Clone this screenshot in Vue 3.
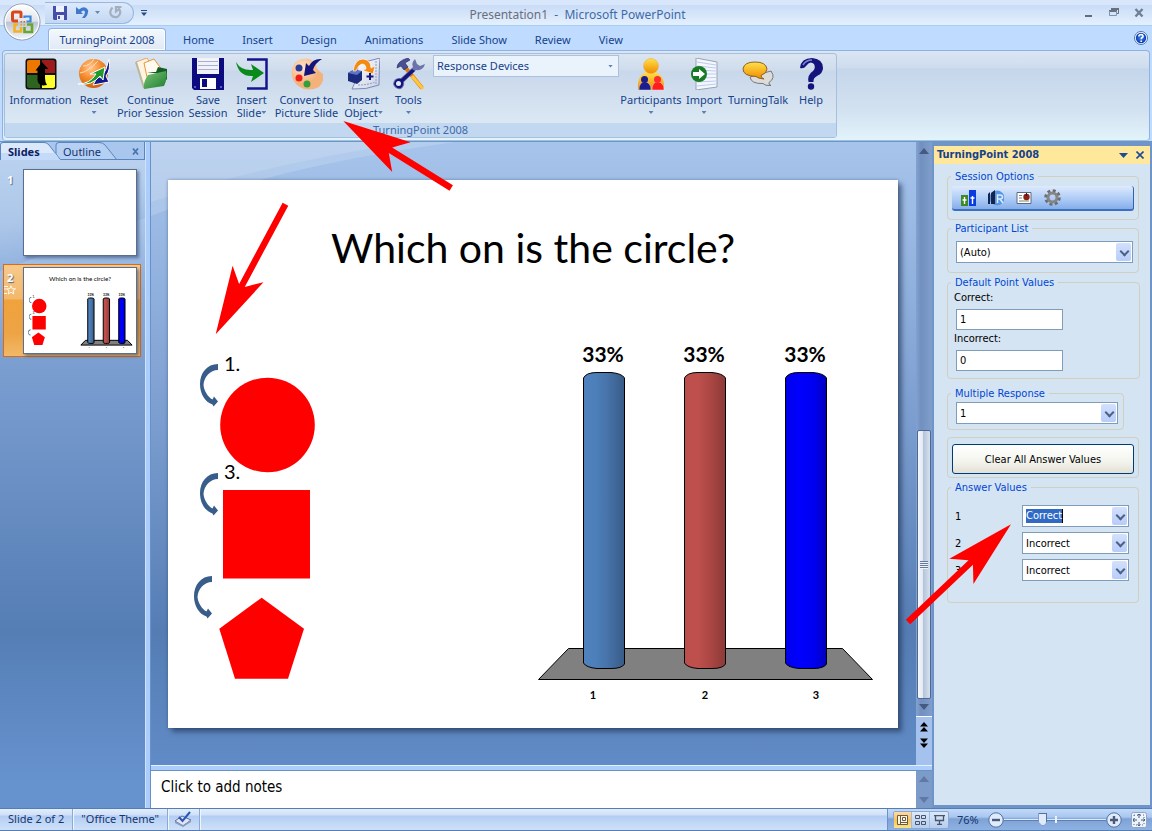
<script setup>
import { ref } from 'vue'

const tabs = ['Home', 'Insert', 'Design', 'Animations', 'Slide Show', 'Review', 'View']
const commandsLeft = [
  { id: 'info', cls: 'w-info', lines: ['Information'] },
  { id: 'reset', cls: 'w-reset', lines: ['Reset'], drop: true },
  { id: 'continue', cls: 'w-continue', lines: ['Continue', 'Prior Session'] },
  { id: 'save', cls: 'w-save', lines: ['Save', 'Session'] },
  { id: 'insert', cls: 'w-insert', lines: ['Insert', 'Slide'], drop: true },
  { id: 'convert', cls: 'w-convert', lines: ['Convert to', 'Picture Slide'] },
  { id: 'object', cls: 'w-object', lines: ['Insert', 'Object'], drop: true },
  { id: 'tools', cls: 'w-tools', lines: ['Tools'], drop: true }
]
const commandsRight = [
  { id: 'people', cls: 'w-people', lines: ['Participants'], drop: true },
  { id: 'import', cls: 'w-import', lines: ['Import'], drop: true },
  { id: 'talk', cls: 'w-talk', lines: ['TurningTalk'] },
  { id: 'help', cls: 'w-help', lines: ['Help'] }
]
const columns = [
  { x: 415, fill: 'url(#colBlue)', label: 435, axis: 425 },
  { x: 516, fill: 'url(#colRed)', label: 536, axis: 537 },
  { x: 617, fill: 'url(#colDeep)', label: 637, axis: 648 }
]
const answers = ref(['Correct', 'Incorrect', 'Incorrect'])
const correctPoints = ref('1')
const incorrectPoints = ref('0')
const zoom = ref(37)
</script>

<template>
  <div class="app">
    <svg class="defs" aria-hidden="true">
      <defs>
        <linearGradient id="colBlue"><stop offset="0" stop-color="#4f81bd" /><stop offset=".3" stop-color="#4d7fba" /><stop offset=".6" stop-color="#4672a8" /><stop offset="1" stop-color="#385b87" /></linearGradient>
        <linearGradient id="colRed"><stop offset="0" stop-color="#bb4e4b" /><stop offset=".3" stop-color="#c0504d" /><stop offset=".6" stop-color="#ad4845" /><stop offset="1" stop-color="#8c3a38" /></linearGradient>
        <linearGradient id="colDeep"><stop offset="0" stop-color="#0000e8" /><stop offset=".3" stop-color="#0000ff" /><stop offset=".7" stop-color="#0000f0" /><stop offset="1" stop-color="#0000bc" /></linearGradient>
        <radialGradient id="gOrange" cx=".4" cy=".3" r=".75"><stop offset="0" stop-color="#ffc890" /><stop offset=".5" stop-color="#f58a2c" /><stop offset="1" stop-color="#cc5a08" /></radialGradient>
        <linearGradient id="gYellow" x1="0" y1="0" x2="0" y2="1"><stop offset="0" stop-color="#ffe14a" /><stop offset="1" stop-color="#f08a00" /></linearGradient>
        <linearGradient id="gGreen" x1="0" y1="0" x2="1" y2="1"><stop offset="0" stop-color="#7cc47c" /><stop offset="1" stop-color="#1c7d2a" /></linearGradient>
        <linearGradient id="gPaper" x1="0" y1="0" x2="1" y2="1"><stop offset="0" stop-color="#ffffff" /><stop offset="1" stop-color="#c9d2e2" /></linearGradient>
        <radialGradient id="gFlesh" cx=".35" cy=".3"><stop offset="0" stop-color="#ffe6cc" /><stop offset="1" stop-color="#f4b27a" /></radialGradient>
        <linearGradient id="gOffice" x1="0" y1="0" x2="0" y2="1"><stop offset="0" stop-color="#ffffff" /><stop offset=".48" stop-color="#dfe4ec" /><stop offset=".5" stop-color="#b9c3d3" /><stop offset="1" stop-color="#f4f8ff" /></linearGradient>
        <radialGradient id="gHelp"><stop offset="0" stop-color="#3f86f0" /><stop offset="1" stop-color="#0a3ab4" /></radialGradient>
      </defs>

      <symbol id="ic-info" viewBox="0 0 32 32">
        <rect x=".5" y=".5" width="31" height="31" rx="3" fill="#111" />
        <path d="M4 2H15V15H2V4Q2 2 4 2Z" fill="#ee7700" /><path d="M17 2H28Q30 2 30 4V15H17Z" fill="#9c1c1c" />
        <path d="M2 17H15V30H4Q2 30 2 28Z" fill="#2c6420" /><path d="M17 17H30V28Q30 30 28 30H17Z" fill="#ffff2e" />
        <path d="M17 4L23.500 11L20 11V20Q20 24 22 27Q13 29 12.500 22V12.500L10.500 12.500Z" fill="#000" />
      </symbol>
      <symbol id="ic-reset" viewBox="0 0 32 32">
        <circle cx="15.500" cy="15.500" r="14.500" fill="url(#gOrange)" />
        <path d="M2 15Q10 14 20 3M5 8Q12 8 16 1" stroke="#ffdcb8" fill="none" stroke-width="1" />
        <path d="M31 1Q33 12 28 18L31 24L15 27L20 18L23 20Q29 12 31 1Z" fill="#141c8c" stroke="#fff" stroke-width="1" />
        <path d="M0 26Q12 26 18 16L12 16L27 9L25 22L22 18Q14 28 0 26Z" fill="#1f9a2a" stroke="#fff" stroke-width="1" />
      </symbol>
      <symbol id="ic-continue" viewBox="0 0 32 32">
        <path d="M1 4L12 0L19 11L12 30L9 30Z" fill="#fff4e0" stroke="#e8a468" />
        <path d="M9 5L19 1L27 12L24 17L12 19Z" fill="#fffaf0" stroke="#e8963c" />
        <path d="M1 4L9 30" stroke="#b8b8a0" stroke-width="2" />
        <path d="M12 14H21L23 9L32 11V22L25 16Z" fill="#145c24" />
        <path d="M13 17L31 13Q33 20 29 28L9 31Q8 24 13 17Z" fill="url(#gGreen)" />
      </symbol>
      <symbol id="ic-save" viewBox="0 0 32 32">
        <path d="M0 0H32V32H2L0 30Z" fill="#0c0c80" />
        <path d="M5 0H27V16H5Z" fill="#f2f2fa" /><path d="M6 3.500H26M6 7.500H26M6 11.500H26" stroke="#a8b0cc" />
        <path d="M8 20H24V31H8Z" fill="#fff" /><path d="M10 21H15V29H10Z" fill="#0c0c80" /><path d="M2 28h2v2H2zM28 28h2v2h-2z" fill="#5a5ac0" />
      </symbol>
      <symbol id="ic-insert" viewBox="0 0 32 32">
        <path d="M11 1.500H30.500V30.500H11" fill="none" stroke="#14148c" stroke-width="2.500" />
        <path d="M0 4Q5 13 17 12L15 6L28 15L15 24L17 18Q3 19 0 4Z" fill="#0b8a1c" />
      </symbol>
      <symbol id="ic-convert" viewBox="0 0 32 32">
        <path d="M12 1Q20-1 25 7Q26 13 32 16Q34 22 28 29Q16 35 6 27Q-3 17 3 6Q7 1 12 1Z" fill="url(#gFlesh)" />
        <circle cx="8" cy="10" r="3.500" fill="#2a3a9c" /><circle cx="8" cy="20" r="3.500" fill="#ee1c1c" /><circle cx="16" cy="26" r="3.500" fill="#2fa03c" />
        <path d="M31 1Q22 0 18 8L15 5L13 18L25 15L22 12Q24 5 31 1Z" fill="#14147c" />
      </symbol>
      <symbol id="ic-object" viewBox="0 0 32 32">
        <path d="M10 4Q20 4 32 0Q31 12 31 27Q18 32 4 31Q10 20 10 4Z" fill="url(#gPaper)" stroke="#7d88b8" />
        <path d="M28 3V27M10 27Q20 27 27 24" fill="none" stroke="#8e9bd0" stroke-dasharray="2 1" />
        <path d="M0 15L5 12L14 13V22L9 26L0 23Z" fill="#1c2c7c" /><path d="M0 15L9 17L14 13L5 12Z" fill="#5b77c8" />
        <path d="M5 13Q7 1 15 1Q23 2 23 10L27 8L25 16L14 12L18 11Q18 6 14 6Q10 7 8 13Z" fill="#f58a10" stroke="#fff" stroke-width=".6" />
        <path d="M22 15v7M18.500 18.500h7" stroke="#14147c" stroke-width="2" />
      </symbol>
      <symbol id="ic-tools" viewBox="0 0 32 32">
        <path d="M12 9L29 30" stroke="#e07a08" stroke-width="4" /><path d="M19 18L30 31" stroke="#ffc83c" stroke-width="3" />
        <path d="M4 10Q4 3 15 0L17 2L12 5L15 9L11 12L8 8Z" fill="#4a4f94" stroke="#23265c" stroke-width=".6" />
        <path d="M22 1Q18 5 20 9L8 20Q1 19 0 26Q2 32 8 31Q12 28 11 24L23 12Q30 13 32 6L27 8L24 6Z" fill="#6b73aa" />
        <path d="M19 11L8 21Q2 20 1 26Q3 31 8 30Q11 27 10 24L22 13" fill="#14147c" /><circle cx="5.500" cy="25.500" r="2.500" fill="#e4eaf6" />
      </symbol>
      <symbol id="ic-people" viewBox="0 0 32 32">
        <path d="M3 32Q2 16 12 14H19Q30 16 29 32Z" fill="url(#gYellow)" />
        <circle cx="16" cy="8" r="7.500" fill="url(#gYellow)" stroke="#f2a33c" stroke-width=".5" />
        <path d="M4 32Q4 24 9.500 24Q16 24 16 32Z" fill="#1c1c8c" stroke="#fff" stroke-width=".4" /><circle cx="9.500" cy="21.500" r="3.500" fill="#1c1c8c" />
        <path d="M17 32Q17 24 22.500 24Q29 24 29 32Z" fill="#ff1c1c" stroke="#fff" stroke-width=".4" /><circle cx="22.500" cy="21.500" r="3.500" fill="#ff2c2c" />
      </symbol>
      <symbol id="ic-import" viewBox="0 0 32 32">
        <path d="M8 0L29 4V29L8 32Z" fill="#f4f7ff" stroke="#9aa2b4" />
        <path d="M9 4L28 7M9 8L28 10M9 12L28 13M9 16H28M9 20L28 19.500M9 24L28 23M9 28L28 26" stroke="#bccbee" stroke-width="1.200" />
        <circle cx="11" cy="16" r="8" fill="#177a24" /><path d="M5 14H11V11L17 16L11 21V18H5Z" fill="#fff" />
      </symbol>
      <symbol id="ic-talk" viewBox="0 0 32 32">
        <path d="M29 13Q34 20 27 24.500Q26 26 29 27.500Q23 28 21 25.500Q9 26 8 19Z" fill="#dcdcdc" stroke="#777" />
        <path d="M13 4Q24 4 25 11Q25 15 19 17.500Q19 20 22 21Q16 20.500 14 18.500Q1 18 1 11Q2 4 13 4Z" fill="url(#gYellow)" stroke="#8a6420" />
      </symbol>
      <symbol id="ic-help" viewBox="0 0 32 32">
        <path d="M5 10Q6 0 17 0Q28 1 28 10Q28 15 22 18Q18 20 18.500 24H13.500Q12 17 18 13Q21 10 19 6Q15 2 11 8Q9 11 5 10Z" fill="#14147c" />
        <path d="M8 7Q11 2 17 2" stroke="#7c88d0" stroke-width="1.500" fill="none" /><circle cx="16" cy="28.500" r="3.200" fill="#14147c" />
      </symbol>

      <symbol id="curve" viewBox="0 0 18 43">
        <path d="M18 0C7 0 0 9 0 20C0 30 5 38 12.500 40.500L13.500 42.500L18 37.500L14 32.500L12.500 35.500C8 33 4 27 3.500 21C4 13 10 6 18 6Z" fill="#385d8a" />
      </symbol>
    </svg>

    <header class="titlebar">
      <div class="quick">
        <button type="button" aria-label="Save">
          <svg width="14" height="14" viewBox="0 0 14 14"><path d="M0 0H14V14H1L0 13Z" fill="#4450a8" /><path d="M3 0H11V6H3Z" fill="#eef2ff" /><path d="M4 9H11V14H4Z" fill="#e8ecfa" /><path d="M5 10H7V13H5Z" fill="#4450a8" /></svg>
        </button>
        <button type="button" aria-label="Undo">
          <svg width="13" height="13" viewBox="0 0 13 13"><path d="M0 1V8H7L5 6Q8 3 9 6Q9 9 6 12H9Q13 8 12 4Q9-1 3 3.500Z" fill="#3f78cc" /></svg>
        </button>
        <svg class="tri" width="5" height="3" viewBox="0 0 5 3"><path d="M0 0H5L2.500 3Z" fill="#5f88bb" /></svg>
        <button type="button" class="redo" aria-label="Repeat">
          <svg width="13" height="13" viewBox="0 0 13 13"><path d="M3.500 1.500Q0 5 2 9Q5 12.500 9 10.500Q13 7 10 3L7 5.500V1H12.500" fill="none" stroke="#a3aec0" stroke-width="2.200" /></svg>
        </button>
      </div>
      <button type="button" class="more" aria-label="Customize">
        <svg width="6" height="6" viewBox="0 0 6 6"><path d="M0 0H6V1H0ZM0 2.500H6L3 6Z" fill="#2a4a85" /></svg>
      </button>
      <h1 class="caption"><span>Presentation1</span>&nbsp; -&nbsp; Microsoft PowerPoint</h1>
      <div class="winbtns">
        <button type="button" aria-label="Minimize"><svg width="10" height="10" viewBox="0 0 10 10"><path d="M1 7H8V9H1Z" fill="#646c78" /></svg></button>
        <button type="button" aria-label="Restore"><svg width="10" height="10" viewBox="0 0 10 10"><path d="M2.500 3V.5H9.500V5.500H7" fill="none" stroke="#66707f" /><path d="M2 0H10V2H2ZM0 2H8V4H0Z" fill="#66707f" /><path d="M.5 3V7.500H7.500V3" fill="none" stroke="#7d93b3" /></svg></button>
        <button type="button" aria-label="Close"><svg width="10" height="10" viewBox="0 0 10 10"><path d="M1.500 1L8.500 8.500M8.500 1L1.500 8.500" stroke="#6f7f96" stroke-width="2.400" /></svg></button>
      </div>
    </header>

    <nav class="tabs">
      <button type="button" class="tab active">TurningPoint 2008</button>
      <button v-for="t in tabs" :key="t" type="button" class="tab">{{ t }}</button>
      <button type="button" class="helpbtn" aria-label="Help">
        <svg width="14" height="14" viewBox="0 0 14 14"><circle cx="7" cy="7" r="6.500" fill="#fff" stroke="#4a78b8" /><circle cx="7" cy="7" r="5.200" fill="url(#gHelp)" /><path d="M4.800 5.500Q5 3.500 7.200 3.500Q9.300 3.800 9 5.700Q7.200 6.800 7.200 8.300M7.200 9.500V11" stroke="#fff" stroke-width="1.600" fill="none" /></svg>
      </button>
    </nav>

    <button type="button" class="office" aria-label="Office Button">
      <svg width="38" height="38" viewBox="0 0 38 38">
        <circle cx="19" cy="19" r="18" fill="url(#gOffice)" stroke="#8794aa" />
        <circle cx="19" cy="19" r="16.800" fill="none" stroke="#fff" stroke-width="1.200" />
        <g fill="none">
          <path d="M18 15V10Q18 9 17 9H11Q9.500 9 9.500 10.500V16.500Q9.500 18 11 18H15" stroke="#d9481a" stroke-width="3" />
          <path d="M21.500 15V13.500H27.500V18.500H23.500" stroke="#3a86d8" stroke-width="2.200" />
          <path d="M15 21.500H11.500V28.500H18V24" stroke="#f6b21c" stroke-width="2.600" />
          <path d="M24 21.500H29V29H21.500V24" stroke="#6aa52c" stroke-width="2.600" />
        </g>
        <path d="M17.500 18h1.500v1.500h-1.500zM20.500 18h1.500v1.500h-1.500z" fill="#e0601c" /><path d="M17.500 21h1.500v1.500h-1.500zM20.500 21h1.500v1.500h-1.500z" fill="#e8a020" />
      </svg>
    </button>

    <section class="ribbon">
      <div class="group">
        <div class="commands">
          <button v-for="c in commandsLeft" :key="c.id" type="button" class="cmd" :class="c.cls">
            <svg width="32" height="32"><use :href="'#ic-' + c.id" /></svg>
            <span>{{ c.lines[0] }}</span>
            <span class="second">{{ c.lines[1] }}<i v-if="c.drop" class="drop"></i></span>
          </button>
          <div class="devices">
            <select aria-label="Response Devices"><option>Response Devices</option></select>
            <i class="drop"></i>
          </div>
          <button v-for="c in commandsRight" :key="c.id" type="button" class="cmd" :class="c.cls">
            <svg width="32" height="32"><use :href="'#ic-' + c.id" /></svg>
            <span>{{ c.lines[0] }}</span>
            <span class="second"><i v-if="c.drop" class="drop"></i></span>
          </button>
        </div>
        <div class="grouplabel">TurningPoint 2008</div>
      </div>
    </section>

    <main class="work">
      <aside class="slides">
        <div class="stabs">
          <svg class="stabshape" width="145" height="18" viewBox="0 0 145 18">
            <path d="M0 0H145V18H0Z" fill="#a9c7ee" /><path d="M56 18V3Q56 .5 59 .5H99Q103 .5 105 3L117 18Z" fill="#b5d0f3" stroke="#5a85bd" />
            <path d="M61 17.500H145" stroke="#5a85bd" /><path d="M.5 18.500V3Q.5 .5 3 .5H44Q47 .5 49 3L61 18.500Z" fill="#dce9fb" stroke="#5a85bd" />
            <path d="M1 18H60L55 11H1Z" fill="#c3daf8" /><path d="M144.500 0V18" stroke="#5a85bd" />
          </svg>
          <button type="button" class="stab on">Slides</button>
          <button type="button" class="stab">Outline</button>
          <button type="button" class="sclose" aria-label="Close pane"><svg width="7" height="7" viewBox="0 0 7 7"><path d="M1 .5L6 6.500M6 .5L1 6.500" stroke="#4a76ae" stroke-width="1.800" /></svg></button>
        </div>
        <div class="thumbrow">
          <span class="num">1</span>
          <div class="thumb"></div>
        </div>
        <div class="thumbrow selected">
          <span class="num">2
            <svg width="12" height="10" viewBox="0 0 12 10"><path d="M7 .8L8.300 3.800H11.500L9 5.800L9.800 9L7 7.200L4.200 9L5 5.800L2.500 3.800H5.700ZM0 1.500H4M0 4H2M0 8.500H3" fill="none" stroke="#fff" stroke-width=".9" /></svg>
          </span>
          <div class="thumb"><svg class="mini" viewBox="0 0 730 548"><use href="#slide-art" /></svg></div>
        </div>
      </aside>
      <div class="vsplit"></div>

      <div class="center">
        <div class="stage">
          <div class="canvas">
            <svg class="wash" viewBox="0 0 765 200" preserveAspectRatio="xMinYMin slice" aria-hidden="true">
              <path d="M0 0H304Q120 25 0 74Z" fill="#fff" opacity=".16" /><path d="M0 0H262Q120 20 0 60Z" fill="#fff" opacity=".12" />
            </svg>
            <div class="slide">
              <svg viewBox="0 0 730 548">
                <symbol id="slide-art" viewBox="0 0 730 548">
                  <text class="t-title" x="365" y="83" text-anchor="middle">Which on is the circle?</text>
                  <text class="t-num" x="56" y="191">1.</text>
                  <text class="t-num" x="56" y="299">3.</text>
                  <use href="#curve" x="32" y="184" width="18" height="43" />
                  <use href="#curve" x="32" y="293" width="18" height="43" />
                  <use href="#curve" x="26" y="396" width="18" height="43" />
                  <g fill="#f00">
                    <circle cx="99.500" cy="245" r="47.300" /><path d="M55 310H142V398.500H55Z" />
                    <path d="M93.700 417.700L136 448.700L120 498.700H67L51.300 448.700Z" />
                  </g>
                  <path class="edge" d="M370.500 499.500L400.500 468.500H674.500L704.500 499.500Z" fill="#808080" />
                  <g v-for="(c, i) in columns" :key="i">
                    <path class="edge" :transform="`translate(${c.x} 0)`" :fill="c.fill" d="M.5 198Q3 192.500 14 192.500H28Q39 193.500 41.500 198V484Q39 488.500 28 488.500H14Q3 487.500 .5 483Z" />
                    <text class="t-pct" :x="c.label" y="182" text-anchor="middle">33%</text>
                    <text class="t-axis" :x="c.axis" y="519" text-anchor="middle">{{ i + 1 }}</text>
                  </g>
                </symbol>
                <use href="#slide-art" />
              </svg>
            </div>
          </div>
          <div class="vscroll">
            <svg width="10" height="6" viewBox="0 0 10 6"><path d="M5 0L10 6H0Z" fill="#46597f" /></svg>
            <div class="gap"></div>
            <div class="thumbbar"><i></i></div>
            <svg class="down" width="10" height="6" viewBox="0 0 10 6"><path d="M0 0H10L5 6Z" fill="#46597f" /></svg>
            <div class="jump">
              <button type="button" aria-label="Previous Slide"><svg width="8" height="10" viewBox="0 0 8 10"><path d="M4 0L8 4.500H0ZM4 5L8 9.500H0Z" /></svg></button>
              <button type="button" aria-label="Next Slide"><svg width="8" height="10" viewBox="0 0 8 10"><path d="M0 .5H8L4 5ZM0 5.500H8L4 10Z" /></svg></button>
            </div>
          </div>
        </div>
        <div class="hsplit"></div>
        <div class="notes">
          <p>Click to add notes</p>
          <div class="nscroll">
            <svg width="10" height="6" viewBox="0 0 10 6"><path d="M5 0L10 6H0Z" fill="#6078a4" /></svg>
            <svg width="10" height="6" viewBox="0 0 10 6"><path d="M0 0H10L5 6Z" fill="#6078a4" /></svg>
          </div>
        </div>
      </div>

      <aside class="pane">
        <div class="panehead">
          <h2>TurningPoint 2008</h2>
          <button type="button" aria-label="Pane menu"><svg width="9" height="5" viewBox="0 0 9 5"><path d="M0 0H9L4.500 5Z" fill="#1d4b94" /></svg></button>
          <button type="button" aria-label="Close"><svg width="8" height="8" viewBox="0 0 8 8"><path d="M.5 .5L7.500 7.500M7.500 .5L.5 7.500" stroke="#1d4b94" stroke-width="1.600" /></svg></button>
        </div>

        <fieldset class="f-session">
          <legend>Session Options</legend>
          <div class="toolbar">
            <button type="button" aria-label="Participants"><svg width="15" height="16" viewBox="0 0 15 16"><path d="M0 5H7V16H0Z" fill="#3d8a22" /><path d="M8 0H15V16H8Z" fill="#0a3ce0" /><path d="M3.500 7V14M1.500 10H5.500M11.500 6V14M9.500 8H13.500" stroke="#fff" stroke-width="1.400" /></svg></button>
            <button type="button" aria-label="Results"><svg width="16" height="16" viewBox="0 0 16 16"><circle cx="9" cy="8" r="7.500" fill="#5a97e2" /><path d="M0 4L2 2V14H0ZM3 3L7 0V14H3Z" fill="#14244c" /><path d="M9.500 13V5H12Q14.500 5 14.500 7Q14.500 9 12 9H9.500M12 9L15 13" stroke="#dcebff" stroke-width="1.500" fill="none" /></svg></button>
            <button type="button" aria-label="Charts"><svg width="16" height="16" viewBox="0 0 16 16"><path d="M1 2.500H15V13.500H1Z" fill="#fff" stroke="#5c6a80" /><path d="M3 5.500H6M3 8H6M3 11H13" stroke="#7a8a74" /><circle cx="10.500" cy="7" r="3.200" fill="#8c1f14" /><path d="M10.500 3V6" stroke="#222" /></svg></button>
            <button type="button" aria-label="Settings"><svg width="17" height="17" viewBox="0 0 17 17"><circle cx="8.500" cy="8.500" r="4.500" fill="none" stroke="#858585" stroke-width="3" /><circle cx="8.500" cy="8.500" r="7" fill="none" stroke="#6c6c6c" stroke-width="2.600" stroke-dasharray="3 2.500" /></svg></button>
          </div>
        </fieldset>

        <fieldset class="f-list">
          <legend>Participant List</legend>
          <div class="combo"><select aria-label="Participant List"><option>(Auto)</option></select><i></i></div>
        </fieldset>

        <fieldset class="f-points">
          <legend>Default Point Values</legend>
          <label for="pc">Correct:</label>
          <input id="pc" v-model="correctPoints" type="text" />
          <label for="pi">Incorrect:</label>
          <input id="pi" v-model="incorrectPoints" type="text" />
        </fieldset>

        <fieldset class="f-multi">
          <legend>Multiple Response</legend>
          <div class="combo"><select aria-label="Multiple Response"><option>1</option></select><i></i></div>
        </fieldset>

        <fieldset class="f-clear">
          <button type="button" class="clear">Clear All Answer Values</button>
        </fieldset>

        <fieldset class="f-answers">
          <legend>Answer Values</legend>
          <div v-for="(a, i) in answers" :key="i" class="answer">
            <label :for="'ans' + i">{{ i + 1 }}</label>
            <div v-if="i === 0" class="combo"><button :id="'ans' + i" type="button" class="picked"><mark>{{ a }}</mark></button><i></i></div>
            <div v-else class="combo"><select :id="'ans' + i" v-model="answers[i]"><option>Correct</option><option>Incorrect</option></select><i></i></div>
          </div>
        </fieldset>
      </aside>
    </main>

    <footer class="status">
      <span class="cell">Slide 2 of 2</span>
      <span class="cell">"Office Theme"</span>
      <span class="cell spell">
        <svg width="18" height="16" viewBox="0 0 18 16"><path d="M1 10L8 5L17 9L9 15Z" fill="#dfe6f5" stroke="#5a6d94" /><path d="M1 10V12L9 16V14ZM9 14V16L17 11V9" fill="#8898ba" /><path d="M5 6L8.500 10L16 1" fill="none" stroke="#2a55b8" stroke-width="2" /></svg>
      </span>
      <div class="tools">
        <div class="views">
          <button type="button" class="on" aria-label="Normal"><svg width="11" height="10" viewBox="0 0 11 10"><path d="M.5 .5H10.500V9.500H.5Z" fill="#fff4dc" stroke="#665a48" /><path d="M3.500 .5V9.500M5.500 2.500H8.500V5.500H5.500ZM3.500 7.500H10.500" fill="none" stroke="#665a48" /></svg></button>
          <button type="button" aria-label="Slide Sorter"><svg width="11" height="10" viewBox="0 0 11 10"><path d="M.5 .5H4.500V3.500H.5ZM6.500 .5H10.500V3.500H6.500ZM.5 6.500H4.500V9.500H.5ZM6.500 6.500H10.500V9.500H6.500Z" fill="none" stroke="#4a5468" /></svg></button>
          <button type="button" aria-label="Slide Show"><svg width="11" height="10" viewBox="0 0 11 10"><path d="M0 .5H11M1.500 1V5.500H9.500V1M5.500 6V9M3 9.500H8" fill="none" stroke="#4a5468" stroke-width="1.300" /></svg></button>
        </div>
        <span class="pct">76%</span>
        <button type="button" class="round" aria-label="Zoom out"><svg width="16" height="16" viewBox="0 0 16 16"><circle cx="8" cy="8" r="7.200" fill="#dfeafa" stroke="#54729f" /><path d="M4 8H12" stroke="#4a5a78" stroke-width="2.400" /></svg></button>
        <input v-model="zoom" class="zoom" type="range" aria-label="Zoom" min="0" max="100" />
        <button type="button" class="round" aria-label="Zoom in"><svg width="16" height="16" viewBox="0 0 16 16"><circle cx="8" cy="8" r="7.200" fill="#dfeafa" stroke="#54729f" /><path d="M4 8H12M8 4V12" stroke="#4a5a78" stroke-width="2.400" /></svg></button>
        <button type="button" class="fit" aria-label="Fit slide"><svg width="16" height="16" viewBox="0 0 16 16"><rect x=".5" y=".5" width="15" height="15" rx="2" fill="#eef4fc" stroke="#8fa5c8" /><path d="M8 2V6M8 10V14M2 8H6M10 8H14M6.500 3.500L8 2L9.500 3.500M6.500 12.500L8 14L9.500 12.500M3.500 6.500L2 8L3.500 9.500M12.500 6.500L14 8L12.500 9.500" fill="none" stroke="#4a5a78" /><path d="M3 3H13V13H3Z" fill="none" stroke="#5a6a88" stroke-dasharray="1 2" /></svg></button>
      </div>
    </footer>

    <svg class="pointers" width="1152" height="831" viewBox="0 0 1152 831" aria-hidden="true">
      <g fill="#f00">
        <path transform="translate(215.700 334.300) rotate(-61.800)" d="M0 0L68.400-17.500L55.500-3.200H147.600V3.200H55.500L68.400 17.500Z" />
        <path transform="translate(343.300 121) rotate(31.800)" d="M0 0L68.400-17.500L55.500-3.200H127V3.200H55.500L68.400 17.500Z" />
        <path transform="translate(1011 524.300) rotate(136.500)" d="M0 0L68.400-17.500L55.500-3.200H142V3.200H55.500L68.400 17.500Z" />
      </g>
    </svg>
  </div>
</template>

<style>
body { margin: 0; background: #bfdbff; }
</style>

<style scoped>
* { box-sizing: border-box; }
.app {
  position: relative; display: flex; flex-direction: column; min-height: 100vh; overflow: hidden;
  background: #bfdbff; color: #15428b; font: 11px/13px "Noto Sans", "Open Sans", sans-serif;
}
button, input, select { font: inherit; color: inherit; margin: 0; padding: 0; border: 0; background: none; border-radius: 0; }
svg { display: block; flex: none; }
.defs { position: absolute; width: 0; height: 0; }
.pointers { position: absolute; left: 0; top: 0; pointer-events: none; }

.titlebar { display: flex; align-items: center; height: 26px; padding-left: 45px; border-bottom: 1px solid #a9cdee; background: linear-gradient(#d8e7fb 5px, #c9dcf6 5px, #e4f0fe); }
.quick { display: flex; align-items: center; width: 89px; height: 22px; padding-left: 8px; border: 1px solid #9ab8df; border-left: 0; border-radius: 0 11px 11px 0; background: linear-gradient(#dce9fb, #c3d8f3); }
.quick button + button, .quick .redo { margin-left: 9px; }
.quick .tri { margin-left: 6px; }
.more { margin-left: 7px; }
.caption { flex: 1; margin: 5px 0 0; padding-right: 76px; text-align: center; font-weight: 400; font-size: 12px; line-height: 16px; color: #3e6aaa; }
.caption span { color: #696f7c; }
.winbtns { display: flex; gap: 15px; padding-right: 8px; }

.tabs { display: flex; align-items: flex-end; height: 24px; padding-left: 48px; }
.tab { height: 22px; padding: 0 14px; }
.tab.active { width: 118px; padding: 0; margin-right: 3px; border: 1px solid #8db2e3; border-bottom: 0; border-radius: 4px 4px 0 0; background: linear-gradient(#f4f8fe, #dfe9f5); box-shadow: inset 0 0 0 1px #fff; }
.helpbtn { margin: 0 4px 5px auto; }
.office { position: absolute; left: 3px; top: 3px; }

.ribbon { height: 91px; margin: 0 2px; padding: 2px 1px; border: 1px solid #8db2e3; border-radius: 4px; background: linear-gradient(#dbe6f4, #cddcee 17px, #c5d6ec 18px, #d3e2f0 60px, #e2f3fb); border-bottom-color: #9cc3dd; }
.group { width: 833px; height: 85px; border: 1px solid #a6bfdc; border-radius: 3px; background: linear-gradient(#dbe5f2, #cfdcec 16px, #c8d7ea 17px, #dbe8f4 69px); }
.commands { display: flex; height: 69px; padding-left: 3px; }
.cmd { display: flex; flex-direction: column; align-items: center; flex: none; padding-top: 4px; white-space: nowrap; }
.cmd span { line-height: 13px; }
.cmd svg + span { margin-top: 3px; }
.second { display: flex; align-items: center; min-height: 13px; }
.drop { width: 5px; height: 3px; background: #5a7fb5; clip-path: polygon(0 0, 100% 0, 50% 100%); }
.second .drop { margin-left: 3px; }
.second .drop:only-child { margin-left: 0; }
.w-info { width: 65px; } .w-reset { width: 42px; } .w-continue { width: 71px; } .w-save { width: 44px; }
.w-insert { width: 43px; } .w-convert { width: 67px; } .w-object { width: 47px; } .w-tools { width: 43px; }
.w-people { width: 64px; } .w-import { width: 42px; } .w-talk { width: 66px; } .w-help { width: 40px; }
.devices { display: flex; align-items: center; width: 186px; height: 22px; margin: 1px 0 0 3px; padding-right: 5px; border: 1px solid #abc1de; background: #eaf2fb; }
.devices select { flex: 1; height: 20px; padding-bottom: 2px; appearance: none; padding-left: 3px; }
.grouplabel { height: 14px; line-height: 14px; text-align: center; background: #c1d8f0; color: #3e6aaa; }

.work { flex: 1; display: flex; min-height: 0; padding-top: 1px; background: #6f94c8; }
.slides { width: 145px; background: linear-gradient(160deg, rgba(255, 255, 255, .14) 80px, transparent 121px, rgba(255, 255, 255, .12) 121px, transparent 190px), linear-gradient(#b2cded, #a4c2e8 60px, #86a8d8 170px, #7a9dd0 230px, #557eb5 490px, #6692ce 640px); }
.stabs { position: relative; display: flex; height: 19px; margin-bottom: 5px; padding: 2px 6px 0 8px; }
.stabshape { position: absolute; left: 0; top: 0; }
.stab { position: relative; height: 15px; margin-right: 24px; color: #15366f; }
.stab.on { font-weight: 700; color: #0b2265; width: 31px; text-align: left; }
.sclose { position: relative; margin-left: auto; height: 15px; }
.thumbrow { display: flex; margin: 0 4px 5px 3px; padding: 2px 3px; border: 1px solid transparent; }
.thumbrow.selected { border: 1px solid #d86b14; background: linear-gradient(#f6c98c, #f3b86a 34px, #f0a23c 35px, #eda445 75%, #f3b867); }
.num { width: 16px; padding-top: 4px; color: #fff; font-weight: 700; text-align: left; text-shadow: 1px 1px 1px #4d6a99; }
.num svg { margin-top: 1px; margin-left: -3px; }
.thumb { flex: 1; height: 87px; border: 1px solid #5a6e90; background: #fff; box-shadow: 2px 2px 3px rgba(30, 50, 90, .5); }
.mini { width: 100%; height: 100%; }
.vsplit { width: 6px; background: #abcdfb; border-left: 1px solid #cfe2fd; border-right: 1px solid #6890c9; }

.center { flex: 1; display: flex; flex-direction: column; min-width: 0; }
.stage { flex: 1; display: flex; }
.canvas { position: relative; flex: 1; padding: 38px 18px 0 17px; background: linear-gradient(#a6c4eb, #99b8e3 90px, #7b9dcf 280px, #557db4 490px, #618bc6); }
.wash { position: absolute; left: 0; top: 0; width: 100%; height: 200px; }
.slide { position: relative; background: #fff; box-shadow: 4px 4px 5px rgba(30, 50, 85, .6), 0 0 3px rgba(30, 50, 85, .4); }
.slide svg { width: 100%; height: auto; }
.t-title, .t-num, .t-pct, .t-axis { font-family: Lato, "Open Sans", sans-serif; fill: #000; }
.t-title { font-size: 41px; }
.t-num { font-size: 20px; }
.t-pct { font-size: 21px; font-weight: 700; }
.t-axis { font-size: 11px; font-weight: 700; }
.edge { stroke: #000; stroke-width: 1px; vector-effect: non-scaling-stroke; }
.vscroll { display: flex; flex-direction: column; align-items: center; width: 16px; padding-top: 6px; background: linear-gradient(90deg, #83a2d0, #7190bf 5px, #7f9ecb); }
.gap { height: 276px; }
.thumbbar { flex: 1; display: flex; align-items: center; justify-content: center; width: 14px; border: 1px solid #4e6896; border-radius: 2px; background: linear-gradient(90deg, #f4f7fc, #e3eaf4 40%, #b4c4da 45%, #d7e1ee); }
.thumbbar i { width: 8px; height: 8px; background: repeating-linear-gradient(#66799b 0 1px, #eef3fa 1px 2px); }
.down { margin: 5px 0 6px; }
.jump { display: flex; flex-direction: column; align-items: center; gap: 6px; width: 16px; height: 49px; padding-top: 5px; background: #a5c2ee; border-top: 1px solid #fff; }
.hsplit { height: 6px; background: #abcdfb; border-top: 1px solid #e6f1ff; border-bottom: 1px solid #6890c9; }
.notes { display: flex; height: 37px; background: #fff; }
.notes p { flex: 1; margin: 6px 0 0 10px; font: 15px/20px "DejaVu Sans Condensed", "Noto Sans", sans-serif; color: #000; }
.nscroll { display: flex; flex-direction: column; justify-content: space-between; align-items: center; width: 16px; padding: 5px 0; background: #7c9bc9; }

.pane { width: 216px; margin: 4px 2px 3px; background: #d5e4f2; color: #000; font: 11px/13px "DejaVu Sans Condensed", "Noto Sans", sans-serif; }
.panehead { display: flex; align-items: center; height: 18px; padding: 0 6px 0 3px; gap: 8px; background: #ffe79b; }
.panehead h2 { flex: 1; margin: 0; font-size: 11px; line-height: 18px; color: #15428b; }
fieldset { min-width: 0; margin: 0 11px 0 13px; padding: 0 4px; border: 1px solid #cfd0c0; border-radius: 4px; }
legend { padding: 0 4px; margin-left: -1px; color: #0046d5; line-height: 13px; }
.f-session { margin-top: 6px; padding-bottom: 8px; }
.toolbar { display: flex; align-items: center; gap: 12px; height: 25px; margin-top: 3px; padding-left: 9px; border-radius: 3px; border-right: 1px solid #2f62b4; border-bottom: 2px solid #3d6fbe; background: linear-gradient(#dfebfd, #a9c8f5 60%, #86aeea); }
.f-list { margin-top: 2px; padding: 6px 5px 9px 8px; }
.f-list legend, .f-multi legend { margin-left: -5px; }
.combo { display: flex; align-items: center; height: 22px; border: 1px solid #7f9db9; background: #fff; padding: 1px; }
.combo select, .picked { flex: 1; min-width: 0; height: 18px; appearance: none; padding-left: 2px; text-align: left; }
.combo i { position: relative; flex: none; width: 15px; height: 18px; border-radius: 2px; background: linear-gradient(#d3e0fd, #b7cdf9); }
.combo i::after { content: ""; position: absolute; left: 5px; top: 5px; width: 5px; height: 5px; border: solid #4d6185; border-width: 0 2px 2px 0; transform: rotate(45deg); }
.f-points { margin-top: 3px; margin-right: 10px; padding: 2px 8px 7px; display: flow-root; }
.f-points legend { margin-left: -5px; }
.f-points label, .f-points input { display: block; }
.f-points label { margin-left: -2px; }
.f-points input { width: 107px; height: 21px; padding-left: 3px; margin: 5px 0 2px; border: 1px solid #7f9db9; background: #fff; }
.f-points label + input:last-child { margin-bottom: 0; }
.f-multi { margin-top: 8px; margin-right: 26px; padding: 2px 5px 5px 8px; }
.f-clear { margin-top: 7px; padding: 6px 4px 3px; }
.clear { display: block; width: 100%; height: 30px; border: 1px solid #003c74; border-radius: 3px; background: linear-gradient(#fff, #f4f4ee 60%, #e2dfd4); }
.f-answers { margin-top: 3px; padding: 11px 9px 21px 7px; }
.f-answers legend { margin-left: -4px; }
.answer { display: flex; align-items: center; margin-bottom: 5px; }
.answer label { flex: 1; }
.answer:last-child { margin-bottom: 0; }
.answer .combo { width: 107px; }
.picked mark { display: inline-block; background: #316ac5; color: #fff; line-height: 14px; border-right: 1px solid #000; }

.status { display: flex; align-items: center; height: 23px; border-top: 1px solid #567db0; border-bottom: 1px solid #567db0; background: linear-gradient(#e3eefc, #cfe0f8 6px, #b2cdf3 7px, #cfe1f9); color: #15366f; }
.cell { padding: 0 8px; line-height: 19px; padding-bottom: 2px; border-right: 1px solid #8aa9d6; box-shadow: 1px 0 #eef5fe; }
.spell { padding: 2px 7px 3px 6px; }
.tools { display: flex; align-items: center; align-self: stretch; margin-left: auto; padding: 0 5px; border-left: 1px solid #6d90c6; background: linear-gradient(#c3daf9, #a8c6ef 8px, #7ea2d6 10px, #8fb2e3); }
.views { display: flex; height: 18px; border: 1px solid #8ba7d2; border-radius: 2px; background: linear-gradient(#dbe8fa, #b5cdef); }
.views button { display: flex; align-items: center; justify-content: center; width: 18px; border-right: 1px solid #a3bbde; }
.views button:last-child { border-right: 0; }
.views .on { background: linear-gradient(#fbd9a8, #f9c25a 50%, #fde383); }
.pct { width: 23px; margin: 0 8px; }
.zoom { width: 102px; height: 15px; appearance: none; background: linear-gradient(90deg, transparent 51px, #e8f1fd 51px 53px, transparent 53px) 0 4px / 100% 7px no-repeat, linear-gradient(transparent 7px, #dceafb 7px 8px, #5c7fb4 8px 9px, transparent 9px); }
.zoom::-webkit-slider-thumb { appearance: none; width: 9px; height: 13px; border: 1px solid #54729f; background: #dfeafa; clip-path: polygon(0 0, 100% 0, 100% 65%, 50% 100%, 0 65%); }
.fit { margin-left: 9px; }
</style>
